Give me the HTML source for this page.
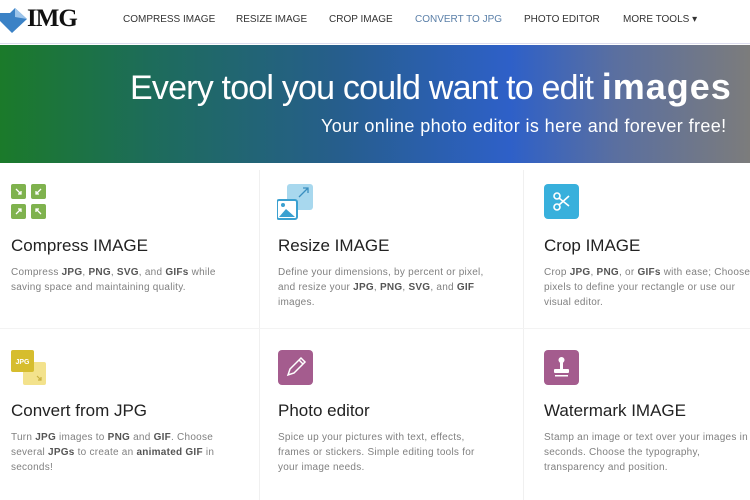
<!DOCTYPE html>
<html><head><style>
*{margin:0;padding:0;box-sizing:border-box}
body{width:750px;height:500px;overflow:hidden;background:#fff;font-family:"Liberation Sans",sans-serif;position:relative}
.hdr{position:absolute;left:0;top:0;width:750px;height:44px;background:#fff;border-bottom:1px solid #dde}
.logo{position:absolute;left:27px;top:5px;font-family:"Liberation Serif",serif;font-weight:bold;font-size:25px;color:#111;letter-spacing:-1px}
.nav{position:absolute;top:14px;font-size:10px;color:#333;letter-spacing:0}
.ban{position:absolute;left:0;top:45px;width:750px;height:118px;background:linear-gradient(90deg,#1b7a2a 0%,#1d6c5a 20%,#265e8c 45%,#2e60c8 68%,#5a6fa0 82%,#7c7c7c 100%)}
.h1{position:absolute;left:130px;top:66px;font-size:34px;color:#fff;white-space:nowrap;letter-spacing:-0.8px}
.h1 b{letter-spacing:1px;font-size:36px}
.h2{position:absolute;left:321px;top:116px;font-size:18px;color:#fff;white-space:nowrap;letter-spacing:0.4px}
.vl{position:absolute;top:170px;width:1px;height:330px;background:#f0f0f0}
.hl{position:absolute;top:328px;left:0;width:750px;height:1px;background:#f3f3f3}
.ic{position:absolute;width:35px;height:35px;border-radius:4px}
.t{position:absolute;font-size:17px;color:#222;white-space:nowrap}
.d{position:absolute;font-size:10px;line-height:15px;color:#808080;white-space:nowrap;letter-spacing:0.25px}
.d b{color:#555}
</style></head><body>
<div class="hdr">
<svg style="position:absolute;left:0;top:8px" width="28" height="26"><path d="M0 5 L10 5 L15 0 L27 11 L12 25 L0 13Z" fill="#3b82c6"/><path d="M15 0 L27 11 L15 9Z" fill="#9cc4ea"/></svg>
<div class="logo">IMG</div>
<div class="nav" style="left:123px">COMPRESS IMAGE</div>
<div class="nav" style="left:236px">RESIZE IMAGE</div>
<div class="nav" style="left:329px">CROP IMAGE</div>
<div class="nav" style="left:415px;color:#5a7fa8">CONVERT TO JPG</div>
<div class="nav" style="left:524px">PHOTO EDITOR</div>
<div class="nav" style="left:623px">MORE TOOLS ▾</div>
</div>
<div class="ban"></div>
<div class="h1">Every tool you could want to edit <b>images</b></div>
<div class="h2">Your online photo editor is here and forever free!</div>
<div class="vl" style="left:259px"></div><div class="vl" style="left:523px"></div>
<div class="hl"></div>

<svg style="position:absolute;left:11px;top:184px" width="36" height="36"><rect x="0" y="0" width="15" height="15" rx="2" fill="#7fb24e"/><rect x="20" y="0" width="15" height="15" rx="2" fill="#7fb24e"/><rect x="0" y="20" width="15" height="15" rx="2" fill="#7fb24e"/><rect x="20" y="20" width="15" height="15" rx="2" fill="#7fb24e"/><g stroke="#fff" stroke-width="1.3" fill="none"><path d="M5 5L10 10M10 7V10H7"/><path d="M30 5L25 10M25 7V10H28"/><path d="M5 30L10 25M7 25H10V28"/><path d="M30 30L25 25M28 25H25V28"/></g></svg>
<div class="t" style="left:11px;top:236px">Compress IMAGE</div>
<div class="d" style="left:11px;top:265px">Compress <b>JPG</b>, <b>PNG</b>, <b>SVG</b>, and <b>GIFs</b> while<br>saving space and maintaining quality.</div>

<svg style="position:absolute;left:277px;top:184px" width="36" height="36"><rect x="10" y="0" width="26" height="26" rx="3" fill="#a8d8ee"/><path d="M22 13L31 4M26 4H31V9" stroke="#3a8fc0" stroke-width="1.3" fill="none"/><rect x="0" y="16" width="20" height="19" rx="2" fill="#fff" stroke="#3aa0d0" stroke-width="2"/><path d="M2 33L9 25L18 33Z" fill="#3aa0d0"/><circle cx="6" cy="21" r="2" fill="#3aa0d0"/></svg>
<div class="t" style="left:278px;top:236px">Resize IMAGE</div>
<div class="d" style="left:278px;top:265px">Define your dimensions, by percent or pixel,<br>and resize your <b>JPG</b>, <b>PNG</b>, <b>SVG</b>, and <b>GIF</b><br>images.</div>

<div class="ic" style="left:544px;top:184px;background:#38b0dc"></div>
<svg style="position:absolute;left:544px;top:184px" width="35" height="35"><g stroke="#fff" stroke-width="1.6" fill="none"><circle cx="13" cy="12" r="3"/><circle cx="13" cy="23" r="3"/><path d="M15 14L25 22M15 21L25 12"/></g></svg>
<div class="t" style="left:544px;top:236px">Crop IMAGE</div>
<div class="d" style="left:544px;top:265px">Crop <b>JPG</b>, <b>PNG</b>, or <b>GIFs</b> with ease; Choose<br>pixels to define your rectangle or use our<br>visual editor.</div>

<svg style="position:absolute;left:11px;top:350px" width="36" height="36"><rect x="12" y="12" width="23" height="23" rx="2" fill="#f3e28c"/><path d="M26 26L30 30M30 27V30H27" stroke="#c8b040" stroke-width="1.2" fill="none"/><rect x="0" y="0" width="23" height="22" rx="2" fill="#d6bd2e"/><text x="11.5" y="14" font-size="7" font-weight="bold" fill="#fff" text-anchor="middle" font-family="Liberation Sans">JPG</text></svg>
<div class="t" style="left:11px;top:401px">Convert from JPG</div>
<div class="d" style="left:11px;top:430px">Turn <b>JPG</b> images to <b>PNG</b> and <b>GIF</b>. Choose<br>several <b>JPGs</b> to create an <b>animated GIF</b> in<br>seconds!</div>

<div class="ic" style="left:278px;top:350px;background:#a45c8e"></div>
<svg style="position:absolute;left:278px;top:350px" width="35" height="35"><g stroke="#fff" stroke-width="1.5" fill="none"><path d="M10 25L12 19L23 8L27 12L16 23Z"/><path d="M21 10L25 14"/></g></svg>
<div class="t" style="left:278px;top:401px">Photo editor</div>
<div class="d" style="left:278px;top:430px">Spice up your pictures with text, effects,<br>frames or stickers. Simple editing tools for<br>your image needs.</div>

<div class="ic" style="left:544px;top:350px;background:#a45c8e"></div>
<svg style="position:absolute;left:544px;top:350px" width="35" height="35"><g fill="#fff"><circle cx="17.5" cy="10" r="3"/><rect x="16" y="12" width="3" height="7"/><rect x="10" y="19" width="15" height="4" rx="1"/><rect x="11" y="25" width="13" height="1.5"/></g></svg>
<div class="t" style="left:544px;top:401px">Watermark IMAGE</div>
<div class="d" style="left:544px;top:430px">Stamp an image or text over your images in<br>seconds. Choose the typography,<br>transparency and position.</div>
</body></html>
